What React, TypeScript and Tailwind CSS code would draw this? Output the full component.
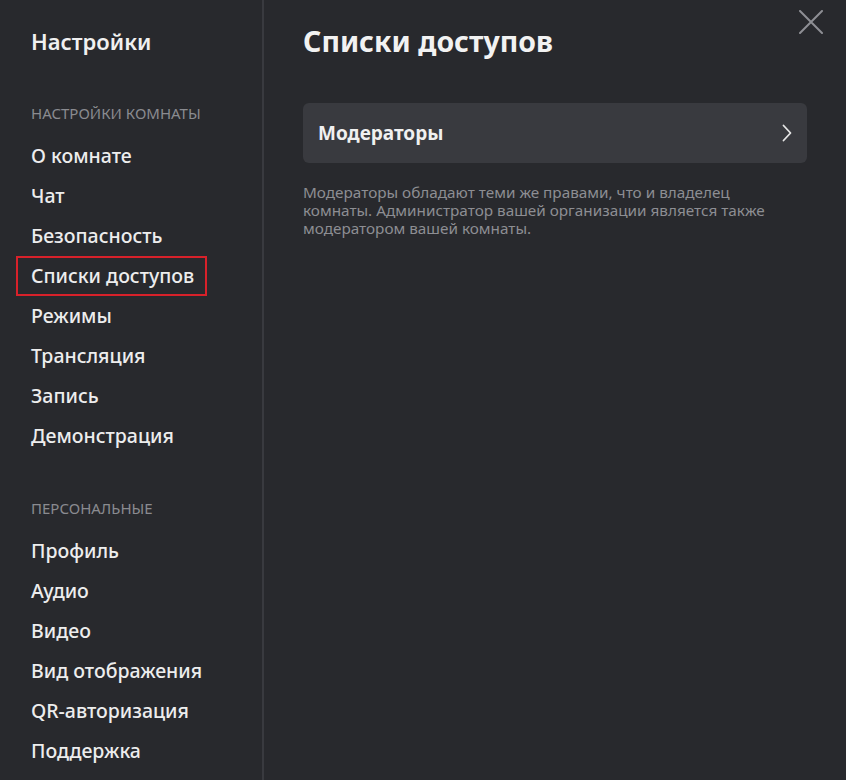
export default function App() {
  const room = ['О комнате', 'Чат', 'Безопасность', 'Списки доступов', 'Режимы', 'Трансляция', 'Запись', 'Демонстрация']
  const personal = ['Профиль', 'Аудио', 'Видео', 'Вид отображения', 'QR-авторизация', 'Поддержка']
  const active = 'Списки доступов'

  const item = (label: string) => (
    <div
      key={label}
      className={
        'h-10 flex items-center text-[19.5px] font-medium text-[#ededed] ' +
        (label === active ? '-ml-[15px] w-[191px] pl-[13px] border-2 border-[#d8212a]' : '')
      }
    >
      {label}
    </div>
  )

  return (
    <div className="w-[846px] h-[780px] bg-[#28292d] flex overflow-hidden" style={{ fontFamily: '"Noto Sans", "Open Sans", sans-serif' }}>
      <aside className="w-[262px] shrink-0 pl-[31px] pt-[24px]">
        <h2 className="text-[22px] font-semibold text-[#f0f0f0] leading-[34px]">Настройки</h2>
        <div className="mt-[43px] text-[15px] text-[#8a8b90] leading-[24px]">НАСТРОЙКИ КОМНАТЫ</div>
        <div className="mt-[11px]">{room.map(item)}</div>
        <div className="mt-[40px] text-[15px] text-[#8a8b90] leading-[24px]">ПЕРСОНАЛЬНЫЕ</div>
        <div className="mt-[11px]">{personal.map(item)}</div>
      </aside>
      <div className="w-[2px] bg-[#393a3f] shrink-0" />
      <main className="flex-1 relative pl-[39px] pr-[39px] pt-[22px]">
        <button className="absolute top-[10px] right-[23px] text-[#8e8f94]">
          <svg width="24" height="24" viewBox="0 0 24 24" fill="none" stroke="currentColor" strokeWidth="2" strokeLinecap="round">
            <path d="M1 1L23 23M23 1L1 23" />
          </svg>
        </button>
        <h1 className="text-[28.5px] font-bold text-[#f2f2f2] leading-[38px]">Списки доступов</h1>
        <div className="mt-[43px] h-[60px] bg-[#393a3f] rounded-md flex items-center justify-between pl-[15px] pr-[15px]">
          <span className="text-[19px] font-bold text-[#f0f0f0]">Модераторы</span>
          <svg width="10" height="18" viewBox="0 0 10 18" fill="none" stroke="#e6e6e6" strokeWidth="1.8" strokeLinecap="round" strokeLinejoin="round">
            <path d="M1.5 1.5L8.5 9L1.5 16.5" />
          </svg>
        </div>
        <p className="mt-[20px] text-[15.3px] leading-[18px] text-[#8d8e93] max-w-[470px]">
          Модераторы обладают теми же правами, что и владелец комнаты. Администратор вашей организации является также модератором вашей комнаты.
        </p>
      </main>
    </div>
  )
}
